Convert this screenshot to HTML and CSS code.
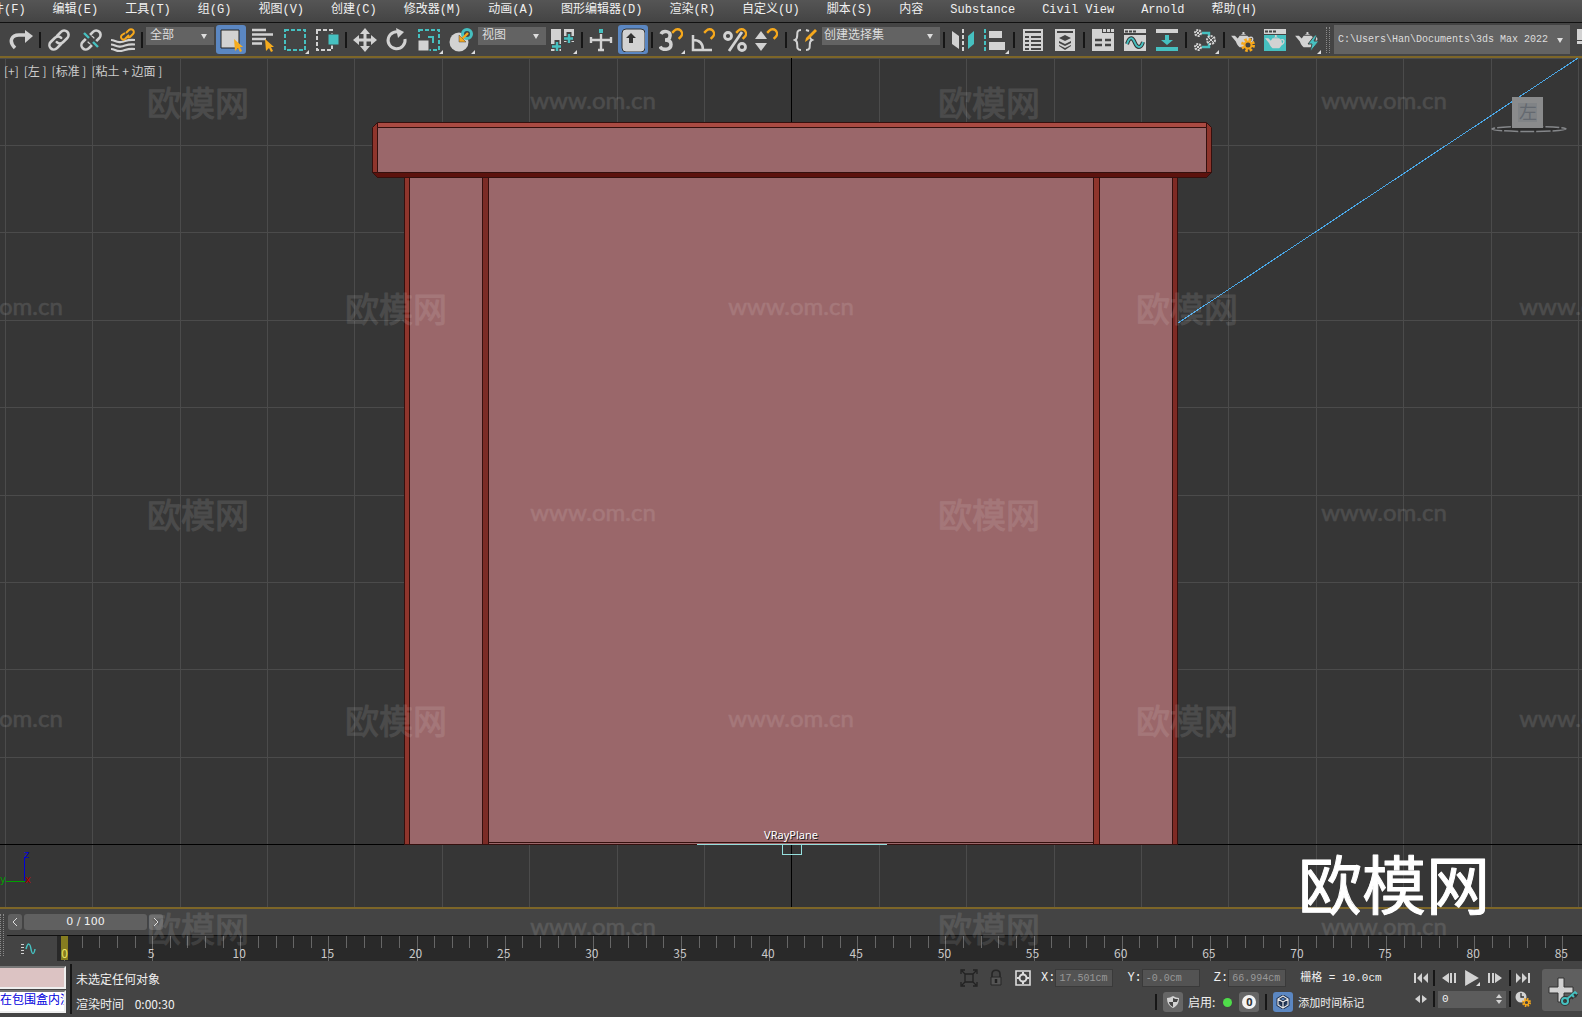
FILE: index.html
```html
<!DOCTYPE html>
<html lang="zh-CN">
<head>
    <meta charset="UTF-8">
    <meta name="viewport" content="width=device-width, initial-scale=1.0">
    <title>3ds Max 2022</title>
    <link rel="stylesheet" href="styles.css">
</head>
<body>
    <svg class="symbols" aria-hidden="true">
        <symbol id="chain" viewBox="0 0 24 24">
            <g fill="none" stroke="#d2d2d2" stroke-width="2.6" stroke-linecap="round">
                <path d="M10 8l4-4.200a4.400 4.400 0 0 1 6.300 6.200l-4.300 4.200a4.400 4.400 0 0 1-6.200 0"/>
                <path d="M14 16l-4 4.200a4.400 4.400 0 0 1-6.300-6.200l4.300-4.200a4.400 4.400 0 0 1 6.200 0"/>
            </g>
        </symbol>
        <symbol id="magnet" viewBox="0 0 12 12">
            <path d="M2 4.500l2-2a4 4 0 0 1 6 5.500l-2 2" fill="none" stroke="#f6a81c" stroke-width="2.200"/>
        </symbol>
        <symbol id="teapot" viewBox="0 0 24 20">
            <path d="M9 5h8c3 2 4 5 3 8-1 2-2 3-3 4H9c-2-2-3-3-4-6L0 5l4 0 3 3zM10 4l2-1V1h2v2l2 1z" fill="#d2d2d2"/>
            <path d="M19 7c5-2 5 4 0 6" fill="none" stroke="#d2d2d2" stroke-width="1.500"/>
        </symbol>
        <symbol id="cursor" viewBox="0 0 10 13">
            <path d="M0 0l9 8H6l2 4-2 1-2-4-3 3z" fill="#f6ac1e"/>
        </symbol>
        <symbol id="gear" viewBox="0 0 14 14">
            <circle cx="7" cy="7" r="5.500" fill="none" stroke="#f6a81c" stroke-width="3" stroke-dasharray="2.500 1.820"/>
            <circle cx="7" cy="7" r="3.500" fill="#444" stroke="#f6a81c" stroke-width="2"/>
        </symbol>
    </svg>

    <nav class="menu-bar">
        <button>文件(F)</button>
        <button>编辑(E)</button>
        <button>工具(T)</button>
        <button>组(G)</button>
        <button>视图(V)</button>
        <button>创建(C)</button>
        <button>修改器(M)</button>
        <button>动画(A)</button>
        <button>图形编辑器(D)</button>
        <button>渲染(R)</button>
        <button>自定义(U)</button>
        <button>脚本(S)</button>
        <button>内容</button>
        <button>Substance</button>
        <button>Civil View</button>
        <button>Arnold</button>
        <button>帮助(H)</button>
    </nav>

    <div class="toolbar">
        <button class="tool" aria-label="重做"><svg viewBox="0 0 24 24"><path d="M6 20C-1 13 3 7 10 7h7" fill="none" stroke="#d2d2d2" stroke-width="3.500"/><path d="M16 2l8 6-8 7z" fill="#d2d2d2"/></svg></button>
        <span class="sep"></span>
        <button class="tool" aria-label="选择并链接"><svg><use href="#chain"/></svg></button>
        <button class="tool" aria-label="取消链接"><svg viewBox="0 0 24 24"><use href="#chain"/><path d="M5 5l14 14" stroke="#444" stroke-width="6"/><path d="M5 5l5 5M14 14l5 5" stroke="#46c0c0" stroke-width="2.400"/></svg></button>
        <button class="tool" aria-label="绑定到空间扭曲"><svg viewBox="0 0 24 24"><g fill="none" stroke="#d2d2d2" stroke-width="2.200"><path d="M0 12c4 0 5 3 10 2s7-3 14-2"/><path d="M0 16.500c4 0 5 3 10 2s7-3 14-2"/><path d="M0 21c4 0 5 3 10 2s7-3 14-2"/></g><path d="M15 5l3-3a2.500 2.500 0 0 1 4 4l-3 3a2.500 2.500 0 0 1-3 0M18 7l-4 4a2.500 2.500 0 0 1-3-4l3-2" fill="none" stroke="#f6a81c" stroke-width="2"/></svg></button>
        <span class="sep"></span>
        <span class="combo"><select aria-label="选择过滤器"><option>全部</option></select></span>
        <button class="tool active" aria-label="选择对象"><svg viewBox="0 0 24 24"><path d="M2 2h18v18H2z" fill="#d2d2d2" stroke="#222"/><use href="#cursor" x="15" y="11" width="10" height="13"/></svg></button>
        <button class="tool" aria-label="按名称选择"><svg viewBox="0 0 24 24"><path d="M1 2h14M1 6.500h21M1 11h14M1 15.500h10" stroke="#d2d2d2" stroke-width="2.400"/><use href="#cursor" x="14" y="11" width="10" height="13"/></svg></button>
        <button class="tool fly" aria-label="矩形选择区域"><svg viewBox="0 0 24 24"><path d="M2 2h20v20H2z" fill="none" stroke="#46c0c0" stroke-width="2" stroke-dasharray="4 2"/></svg></button>
        <button class="tool" aria-label="窗口/交叉"><svg viewBox="0 0 24 24"><path d="M2 2h15v20H2z" fill="none" stroke="#d2d2d2" stroke-width="2" stroke-dasharray="4 2"/><path d="M13 6h11v11H13z" fill="#46c0c0" stroke="#444"/></svg></button>
        <span class="sep"></span>
        <button class="tool" aria-label="选择并移动"><svg viewBox="0 0 24 24"><path d="M12 3v18M3 12h18" stroke="#d2d2d2" stroke-width="3"/><path d="M12 0l5 6H7zM12 24l5-6H7zM0 12l6-5v10zM24 12l-6-5v10z" fill="#d2d2d2"/></svg></button>
        <button class="tool" aria-label="选择并旋转"><svg viewBox="0 0 24 24"><path d="M16 5a8.500 8.500 0 1 0 4 6" fill="none" stroke="#d2d2d2" stroke-width="3"/><path d="M11 0l8 4-6 6z" fill="#d2d2d2"/></svg></button>
        <button class="tool fly" aria-label="选择并缩放"><svg viewBox="0 0 24 24"><path d="M2 2h20v20H2z" fill="none" stroke="#46c0c0" stroke-width="2" stroke-dasharray="4 2"/><path d="M1 12h11v11H1z" fill="#d2d2d2" stroke="#444"/><path d="M11 9h5v6" fill="none" stroke="#46c0c0" stroke-width="2"/></svg></button>
        <button class="tool fly" aria-label="选择并放置"><svg viewBox="0 0 24 24"><circle cx="10" cy="14" r="9.500" fill="#d2d2d2"/><circle cx="18" cy="6" r="4.500" fill="#444" stroke="#46c0c0" stroke-width="3"/><path d="M19 5l-6 6" stroke="#f6a81c" stroke-width="2.400"/><path d="M10 7l7 7h-7z" fill="#f6a81c" stroke="#444" stroke-width=".5"/></svg></button>
        <span class="combo"><select aria-label="参考坐标系"><option>视图</option></select></span>
        <button class="tool fly" aria-label="使用轴点中心"><svg viewBox="0 0 24 24"><path d="M0 1h10v22H0zM13 1h10v13H13z" fill="#d2d2d2"/><path d="M6 12v12M0 18.500h12M18 4v12M12 10.500h12" stroke="#444" stroke-width="5"/><path d="M6 14v9M1 18.500h9M18 6v9M13 10.500h9" stroke="#46c0c0" stroke-width="2.400"/></svg></button>
        <span class="sep"></span>
        <button class="tool" aria-label="选择并操纵"><svg viewBox="0 0 24 24"><path d="M12 6v17M1 12h22M2 9v6M22 9v6M9 22h6" stroke="#d2d2d2" stroke-width="2.400"/><path d="M10 1h4v4h-4z" fill="#46c0c0"/></svg></button>
        <button class="tool active" aria-label="键盘快捷键覆盖"><svg viewBox="0 0 24 24"><rect x="1" y="1" width="23" height="23" rx="4" fill="#d2d2d2" stroke="#333"/><path d="M10 5l5 5h-3v5H8v-5H5z" fill="#333"/></svg></button>
        <span class="sep"></span>
        <button class="tool fly" aria-label="捕捉开关"><svg viewBox="0 0 24 24"><path d="M2 6c2-4 10-3 9 2 0 3-3 4-5 4 3 0 6 1 6 4.500 0 6-9 6-11 2" fill="none" stroke="#d2d2d2" stroke-width="3.500"/><use href="#magnet" x="11" y="0" width="13" height="13"/></svg></button>
        <button class="tool" aria-label="角度捕捉"><svg viewBox="0 0 24 24"><path d="M2 7v15h19M2 12c7 0 10 4 10 10" fill="none" stroke="#d2d2d2" stroke-width="2.500"/><use href="#magnet" x="11" y="0" width="13" height="13"/></svg></button>
        <button class="tool" aria-label="百分比捕捉"><svg viewBox="0 0 24 24"><g fill="none" stroke="#d2d2d2" stroke-width="2.800"><circle cx="5" cy="8" r="3.500"/><circle cx="19" cy="19" r="3.500"/><path d="M19 4L6 23"/></g><use href="#magnet" x="11" y="0" width="13" height="13"/></svg></button>
        <button class="tool" aria-label="微调器捕捉"><svg viewBox="0 0 24 24"><path d="M6 3l6 8H0zM6 23l6-8H0z" fill="#d2d2d2"/><use href="#magnet" x="10" y="0" width="13" height="13"/></svg></button>
        <span class="sep"></span>
        <button class="tool" aria-label="编辑命名选择集"><svg viewBox="0 0 24 24"><path d="M8 2c-7 0-1 8-6 10 5 2-1 10 6 10M13 2l3 1M13 22c7 0 1-8 6-10-2-1-2-2-2-3" fill="none" stroke="#d2d2d2" stroke-width="2"/><path d="M12 14l1-4 9-9 2 2-9 9z" fill="#f6a81c"/></svg></button>
        <span class="combo wide"><select aria-label="命名选择集"><option>创建选择集</option></select></span>
        <span class="sep"></span>
        <button class="tool" aria-label="镜像"><svg viewBox="0 0 24 24"><path d="M1 3l7 5v13l-7-5z" fill="#d2d2d2"/><path d="M12 1v22" stroke="#d2d2d2" stroke-width="2" stroke-dasharray="4 2"/><path d="M23 3l-6 5v13l6-5z" fill="#46c0c0"/></svg></button>
        <button class="tool fly" aria-label="对齐"><svg viewBox="0 0 24 24"><path d="M2 1v22" stroke="#46c0c0" stroke-width="2" stroke-dasharray="4 2"/><path d="M6 3h13v7H6zM6 14h16v8H6z" fill="#d2d2d2"/></svg></button>
        <span class="sep"></span>
        <button class="tool" aria-label="场景资源管理器"><svg viewBox="0 0 24 24"><path d="M2 1h20v22H2z" fill="#d2d2d2"/><path d="M4 4h16M4 9h4M10 9h10M4 13h4M10 13h10M4 17h4M10 17h10M4 21h4M10 21h10" stroke="#444" stroke-width="1.800"/></svg></button>
        <button class="tool" aria-label="层资源管理器"><svg viewBox="0 0 24 24"><path d="M2 1h20v22H2z" fill="#d2d2d2"/><path d="M4 4h16" stroke="#444" stroke-width="2"/><path d="M6 10l6-3 6 3-6 3zM6 13l6 3 6-3v2l-6 3-6-3zM6 17l6 3 6-3v1l-6 4-6-4z" fill="#444"/></svg></button>
        <span class="sep"></span>
        <button class="tool" aria-label="切换功能区"><svg viewBox="0 0 24 24"><path d="M1 1h10v4h12v18H1z" fill="#d2d2d2"/><path d="M12 1h3v3h-3zM16 1h3v3h-3zM20 1h3v3h-3z" fill="#d2d2d2"/><path d="M4 12h7M14 12h6M4 17h7M14 17h6" stroke="#444" stroke-width="2.500"/></svg></button>
        <button class="tool" aria-label="曲线编辑器"><svg viewBox="0 0 24 24"><path d="M1 1h22v22H1z" fill="#d2d2d2"/><path d="M2 3.500h3M6 3.500h3M10 3.500h3M1 6h22" stroke="#444" stroke-width="2"/><path d="M4 16c3-9 6-6 8-1s6 6 8-1" fill="none" stroke="#333" stroke-width="4"/><path d="M4 16c3-9 6-6 8-1s6 6 8-1" fill="none" stroke="#46c0c0" stroke-width="2"/></svg></button>
        <button class="tool" aria-label="图解视图"><svg viewBox="0 0 24 24"><path d="M1 1h22v4H1z" fill="#d2d2d2"/><path d="M10 7h4v5h4l-6 5-6-5h4zM1 19h22v4H1z" fill="#46c0c0"/></svg></button>
        <span class="sep"></span>
        <button class="tool fly" aria-label="材质编辑器"><svg viewBox="0 0 24 24"><path d="M9 5h7v5M9 19h7v-5" fill="none" stroke="#46c0c0" stroke-width="2.400"/><g fill="#555" stroke="#d2d2d2" stroke-width="2" stroke-dasharray="2 1"><circle cx="5" cy="5" r="3"/><circle cx="5" cy="19" r="3"/><circle cx="18" cy="12" r="4"/></g><path d="M3 3l4 4M7 3L3 7M3 17l4 4M7 17l-4 4M15 9l6 6M21 9l-6 6" stroke="#d2d2d2"/></svg></button>
        <span class="sep"></span>
        <button class="tool" aria-label="渲染设置"><svg viewBox="0 0 24 24"><use href="#teapot" x="0" y="3" width="23" height="19"/><use href="#gear" x="10" y="10" width="14" height="14"/></svg></button>
        <button class="tool" aria-label="渲染帧窗口"><svg viewBox="0 0 24 24"><path d="M1 1h22v5H1z" fill="#d2d2d2"/><path d="M2 3.500h3M6 3.500h3M10 3.500h3" stroke="#444" stroke-width="2"/><path d="M1 7h22v16H1z" fill="#46c0c0"/><use href="#teapot" x="2" y="6" width="20" height="17"/></svg></button>
        <button class="tool fly" aria-label="渲染产品"><svg viewBox="0 0 24 24"><use href="#teapot" x="0" y="3" width="23" height="19"/><path d="M20 7l-7 9h4l-2 8 9-11h-5l3-6z" fill="#46c0c0" stroke="#444"/></svg></button>
        <span class="grip"></span>
        <span class="combo path"><select aria-label="项目文件夹"><option>C:\Users\Han\Documents\3ds Max 2022</option></select></span>
        <button class="tool cut" aria-label="更多"><svg viewBox="0 0 8 24"><path d="M2 1h6v11H2zM2 13h6v3H2z" fill="#d2d2d2"/></svg></button>
    </div>

    <main class="viewport">
        <!-- left view: grid, model, light and gizmos -->
        <svg class="scene" viewBox="0 58 1582 849" preserveAspectRatio="xMidYMid slice" role="img" aria-label="左视图">
            <g fill="none" stroke="#4b4b4b" shape-rendering="crispEdges">
                <path d="M5.500 58v849M92.500 58v849M180.500 58v849M267.500 58v849M354.500 58v849M442.500 58v849M529.500 58v849M617.500 58v849M704.500 58v849M879.500 58v849M966.500 58v849M1054.500 58v849M1141.500 58v849M1228.500 58v849M1316.500 58v849M1403.500 58v849M1491.500 58v849M1578.500 58v849"/>
                <path d="M0 58.500h1582M0 145.500h1582M0 232.500h1582M0 320.500h1582M0 407.500h1582M0 495.500h1582M0 582.500h1582M0 669.500h1582M0 757.500h1582"/>
                <path d="M791.500 58v849M0 844.500h1582" stroke="#000"/>
            </g>
            <g stroke="#35100e" shape-rendering="crispEdges">
                <path d="M404.500 177.500h773v667h-773z" fill="#9a676a"/>
                <path d="M404.500 177.500h5v667h-5z" fill="#8f352c"/>
                <path d="M482.500 177.500h6v667h-6z" fill="#7b2b26"/>
                <path d="M1093.500 177.500h6v667h-6z" fill="#8f352c"/>
                <path d="M1172.500 177.500h5v667h-5z" fill="#7f2a24"/>
                <path d="M488.500 842.500h605"/>
            </g>
            <g stroke="#35100e">
                <path d="M377.500 122.500h829l5 5v45l-5 5h-829l-5-5v-45z" fill="#8f352c"/>
                <path d="M377.500 122.500h829v5h-829z" fill="#aa4a42"/>
                <path d="M372.500 172.500h839l-5 5h-829z" fill="#5c120d"/>
                <path d="M377.500 127.500h829v45h-829z" fill="#9a676a"/>
            </g>
            <path d="M1178 323L1578 58" stroke="#4aa8e8" shape-rendering="crispEdges"/>
            <path d="M697 844.500h190M782.500 844v10h19v-10" fill="none" stroke="#96e0de" shape-rendering="crispEdges"/>
            <text class="node-name" x="791" y="839">VRayPlane</text>
            <!-- axis tripod -->
            <g shape-rendering="crispEdges">
                <path d="M24.500 857v25" stroke="#0000d8"/>
                <path d="M6 881.500h19" stroke="#00a000"/>
            </g>
            <text class="axis" x="24" y="858" fill="#0000d8">z</text>
            <text class="axis" x="0" y="883" fill="#00a000">y</text>
            <text class="axis" x="25" y="883" fill="#b00000">x</text>
            <!-- view cube -->
            <ellipse cx="1529" cy="129" rx="37" ry="2.500" fill="#2c2c2c" stroke="#85878a" stroke-width="1.500" stroke-dasharray="14 2"/>
            <path d="M1512 97h31v31h-31z" fill="#8a8b8c"/>
            <path d="M1518 103h19v19h-19z" fill="#808386"/>
            <text class="cube-face" x="1528" y="119">左</text>
        </svg>
        <div class="view-labels">
            <button>[+]</button>
            <button>[左 ]</button>
            <button>[标准 ]</button>
            <button>[粘土 + 边面 ]</button>
        </div>
    </main>

    <div class="time-area">
        <span class="grip"></span>
        <div class="time-main">
            <div class="time-slider">
                <button class="step" aria-label="上一帧"><svg viewBox="0 0 6 10"><path d="M5 1L1 5l4 4" fill="none" stroke="#ddd"/></svg></button>
                <button class="thumb">0 / 100</button>
                <button class="step" aria-label="下一帧"><svg viewBox="0 0 6 10"><path d="M1 1l4 4-4 4" fill="none" stroke="#ddd"/></svg></button>
            </div>
            <div class="track-bar">
                <button class="mini-curve" aria-label="打开迷你曲线编辑器"><svg viewBox="0 0 16 12"><path d="M1 1.500h3M1 4.500h3M1 7.500h3M1 10.500h3" stroke="#d2d2d2"/><path d="M6 6c2-7 4-6 5 0s3 6 4 0" fill="none" stroke="#46c0c0" stroke-width="1.500"/></svg></button>
                <div class="ruler" id="ruler"></div>
            </div>
        </div>
    </div>

    <footer class="status-bar">
        <div class="listener">
            <input class="macro" aria-label="宏录制器">
            <input class="script-line" aria-label="脚本侦听器" value="在包围盒内渲染">
        </div>
        <div class="prompt">
            <p>未选定任何对象</p>
            <p>渲染时间 <span>0:00:30</span></p>
        </div>
        <div class="coords">
            <div class="status-row">
                <button class="mini" aria-label="孤立当前选择"><svg viewBox="0 0 18 18"><path d="M5 5h8v8H5zM1 5V1h4M13 1h4v4M17 13v4h-4M5 17H1v-4M2 2l3 3M16 2l-3 3M16 16l-3-3M2 16l3-3" fill="none" stroke="#222" stroke-width="1.300"/></svg></button>
                <button class="mini" aria-label="选择锁定切换"><svg viewBox="0 0 18 18"><path d="M5 8V5c0-5 8-5 8 0v3" fill="none" stroke="#262626" stroke-width="1.600"/><path d="M4 8h10v8H4z" fill="#555" stroke="#262626"/><path d="M9 10v4" stroke="#222" stroke-width="2.500"/></svg></button>
                <button class="mini" aria-label="绝对模式变换输入"><svg viewBox="0 0 18 18"><path d="M2 2h14v14H2z" fill="none" stroke="#ddd" stroke-width="1.600"/><circle cx="9" cy="9" r="3.500" fill="none" stroke="#ddd" stroke-width="2"/><path d="M9 3v3M9 12v3M3 9h3M12 9h3" stroke="#ddd" stroke-width="2"/></svg></button>
                <label class="coord">X:<input value="17.501cm" disabled></label>
                <label class="coord">Y:<input value="-0.0cm" disabled></label>
                <label class="coord">Z:<input value="66.994cm" disabled></label>
                <span class="grid-size">栅格 = 10.0cm</span>
            </div>
            <div class="status-row tags">
                <span class="sep"></span>
                <button class="chip" aria-label="安全脚本"><svg viewBox="0 0 14 14"><path d="M7 1c2 1 4 2 6 2 0 5-2 8-6 10C3 11 1 8 1 3c2 0 4-1 6-2z" fill="#d2d2d2"/><path d="M7 3v4h4c0-1 1-2 1-3-2 0-3 0-5-1zM7 7v5c-2-1-4-3-4-5z" fill="#444"/></svg></button>
                <span>启用:</span>
                <i class="dot"></i>
                <button class="chip"><b>0</b></button>
                <span class="sep"></span>
                <button class="chip blue" aria-label="自适应降级"><svg viewBox="0 0 14 14"><path d="M7 1l5 3v6l-5 3-5-3V4zM2 4l5 3 5-3M7 7v6M4 9l3-2 3 2" fill="none" stroke="#1c2d4a" stroke-width="3"/><path d="M7 1l5 3v6l-5 3-5-3V4zM2 4l5 3 5-3M7 7v6" fill="none" stroke="#e8e8e8" stroke-width="1.200"/></svg></button>
                <button class="time-tag">添加时间标记</button>
            </div>
        </div>
        <div class="playback">
            <button aria-label="转至开头"><svg viewBox="0 0 16 12"><path d="M1 1h2v10H1zM9 1v10L4 6zM15 1v10l-5-5z"/></svg></button>
            <span class="sep"></span>
            <button aria-label="上一帧"><svg viewBox="0 0 16 12"><path d="M8 1v10L1 6zM9 1h2v10H9zM13 1h2v10h-2z"/></svg></button>
            <button class="play fly" aria-label="播放动画"><svg viewBox="0 0 12 14"><path d="M0 0l12 7-12 7z"/></svg></button>
            <button aria-label="下一帧"><svg viewBox="0 0 16 12"><path d="M1 1h2v10H1zM5 1h2v10H5zM8 1v10l7-5z"/></svg></button>
            <span class="sep"></span>
            <button aria-label="转至结尾"><svg viewBox="0 0 16 12"><path d="M1 1v10l5-5zM7 1v10l5-5zM13 1h2v10h-2z"/></svg></button>
            <button aria-label="关键点模式切换"><svg viewBox="0 0 16 12"><path d="M7 2v8L2 6zM9 2v8l5-4z"/></svg></button>
            <span class="sep"></span>
            <label class="frame"><input aria-label="当前帧" value="0"><svg viewBox="0 0 6 10"><path d="M0 4l3-4 3 4zM0 6l3 4 3-4z"/></svg></label>
            <span class="sep"></span>
            <button aria-label="时间配置"><svg viewBox="0 0 16 16"><circle cx="6" cy="6" r="5.500"/><path d="M6 2v4h3" fill="none" stroke="#333" stroke-width="1.300"/><use href="#gear" x="7" y="7" width="9" height="9"/></svg></button>
        </div>
        <button class="set-key" aria-label="设置关键点"><svg viewBox="0 0 34 34"><path d="M13 5h6v9h9v6h-9v9h-6v-9H4v-6h9z" fill="#d2d2d2" stroke="#333"/><g fill="none"><path d="M20 28l9-7 3 2M27 23l2 2" stroke="#333" stroke-width="4"/><circle cx="20" cy="28" r="3" stroke="#333" stroke-width="4"/><circle cx="20" cy="28" r="3" stroke="#46c0c0" stroke-width="2"/><path d="M22 26l8-7 2 2M27 22l2 2" stroke="#46c0c0" stroke-width="2"/></g></svg></button>
    </footer>

    <svg class="watermark" viewBox="0 0 1582 1017" preserveAspectRatio="xMidYMid slice">
        <g class="mark">
            <text x="198" y="116">欧模网</text>
            <text x="989" y="116">欧模网</text>
            <text x="396" y="322">欧模网</text>
            <text x="1187" y="322">欧模网</text>
            <text x="198" y="528">欧模网</text>
            <text x="989" y="528">欧模网</text>
            <text x="396" y="734">欧模网</text>
            <text x="1187" y="734">欧模网</text>
            <text x="198" y="942">欧模网</text>
            <text x="989" y="942">欧模网</text>
        </g>
        <g class="url">
            <text x="593" y="109">www.om.cn</text>
            <text x="1384" y="109">www.om.cn</text>
            <text x="0" y="315">www.om.cn</text>
            <text x="791" y="315">www.om.cn</text>
            <text x="1582" y="315">www.om.cn</text>
            <text x="593" y="521">www.om.cn</text>
            <text x="1384" y="521">www.om.cn</text>
            <text x="0" y="727">www.om.cn</text>
            <text x="791" y="727">www.om.cn</text>
            <text x="1582" y="727">www.om.cn</text>
            <text x="593" y="935">www.om.cn</text>
            <text x="1384" y="935">www.om.cn</text>
        </g>
        <text class="brand" x="1394" y="909">欧模网</text>
    </svg>

    <script src="script.js"></script>
</body>
</html>
```

FILE: styles.css
```css
* {
    box-sizing: border-box;
}

body {
    margin: 0;
    height: 100vh;
    display: flex;
    flex-direction: column;
    position: relative;
    overflow: hidden;
    background: #444;
    color: #f0f0f0;
    font: 12px/16px "Liberation Mono", "Noto Sans CJK SC", monospace;
}

button,
input,
select {
    font: inherit;
    color: inherit;
    background: none;
    border: none;
    border-radius: 0;
    padding: 0;
    margin: 0;
    white-space: nowrap;
}

p {
    margin: 0;
}

svg {
    display: block;
}

.symbols {
    position: absolute;
    width: 0;
    height: 0;
}

.menu-bar {
    display: flex;
    flex: none;
    gap: 27px;
    height: 23px;
    padding-bottom: 3px;
    margin-left: -20px;
    background: linear-gradient(#555, #444);
    border-bottom: 1px solid #111;
}

/* main toolbar */
.toolbar {
    display: flex;
    flex: none;
    align-items: center;
    gap: 2px;
    height: 35px;
    padding-left: 6px;
    overflow: hidden;
    border-bottom: 2px solid #7d6628;
}

.tool {
    position: relative;
    flex: none;
    width: 30px;
    height: 29px;
    padding: 3px;
    border-radius: 3px;
}

.tool svg {
    width: 24px;
    height: 24px;
}

.tool.active {
    background: #5b87c2;
}

.tool.cut {
    width: 10px;
    overflow: hidden;
}

.tool.cut svg {
    width: 8px;
}

.fly::after {
    content: "";
    position: absolute;
    right: 1px;
    bottom: 0;
    border: 2px solid #ddd;
    border-top-color: transparent;
    border-left-color: transparent;
}

.sep {
    flex: none;
    width: 2px;
    height: 16px;
    margin: 0 1px;
    background: #161616;
}

.grip {
    flex: none;
    width: 4px;
    height: 26px;
    margin: 0 2px;
    border: dotted #8a8a8a;
    border-width: 0 1px;
}

.combo {
    position: relative;
    flex: none;
    align-self: flex-start;
    width: 68px;
    height: 18px;
    margin-top: 4px;
    background: #636363;
}

.combo::after {
    content: "";
    position: absolute;
    right: 7px;
    top: 50%;
    margin-top: -2px;
    border: 3px solid transparent;
    border-top: 5px solid #ddd;
    border-bottom: 0;
}

.combo select {
    appearance: none;
    display: block;
    width: 100%;
    height: 100%;
    padding: 0 4px;
    color: #ddd;
}

.combo.wide {
    width: 118px;
}

.combo.wide select {
    padding-left: 2px;
}

.combo.path {
    flex: 1;
    height: 29px;
    margin-top: 2px;
    font-size: 10px;
}

/* viewport */
.viewport {
    position: relative;
    flex: 1;
    min-height: 0;
    background: #363636;
    border-bottom: 2px solid #7d6628;
}

.scene {
    position: absolute;
    width: 100%;
    height: 100%;
}

.view-labels {
    position: relative;
    display: flex;
    gap: 5px;
    padding: 5px 4px;
    color: #ccc;
    font: 12px/16px "Noto Sans CJK SC", sans-serif;
}

.node-name {
    fill: #fff;
    font: 11px "Noto Sans", sans-serif;
    text-anchor: middle;
    text-shadow: 1px 1px 0 #222;
}

.axis {
    font: 10px "DejaVu Sans", sans-serif;
}

.cube-face {
    fill: #646970;
    font: 18px "Noto Sans CJK SC", sans-serif;
    text-anchor: middle;
}

/* time slider and track bar */
.time-area {
    display: flex;
    flex: none;
    align-items: center;
}

.time-area > .grip {
    height: 42px;
    margin: 0 3px 0 0;
}

.time-main {
    flex: 1;
    min-width: 0;
}

.time-slider {
    display: flex;
    gap: 2px;
    height: 26px;
    padding: 5px 1px;
}

.time-slider button {
    height: 16px;
    background: #606060;
    border-radius: 3px;
    font: 11px/16px "DejaVu Sans", sans-serif;
}

.step {
    width: 14px;
    padding: 3px 4px;
}

.step svg {
    width: 6px;
    height: 10px;
}

.thumb {
    width: 123px;
}

.track-bar {
    display: flex;
    height: 26px;
    border-top: 1px solid #111;
}

.mini-curve {
    flex: none;
    width: 50px;
    padding-left: 13px;
}

.mini-curve svg {
    width: 16px;
    height: 12px;
}

.ruler {
    display: grid;
    grid-auto-flow: column;
    grid-auto-columns: minmax(0, 1fr);
    flex: 1;
    padding: 0 2px 0 7px;
    background: #292929;
    color: #c8c8c8;
    font: 12px/12px "Noto Sans CJK SC", sans-serif;
}

.tick {
    height: 12px;
    border-left: 1px solid #666;
}

.tick.major {
    height: 25px;
    padding-top: 11px;
}

.tick span {
    display: block;
    width: 24px;
    margin-left: -14px;
    text-align: center;
}

.tick.current span {
    width: 7px;
    height: 24px;
    margin: -11px 0 0 -4px;
    padding-top: 11px;
    background: #857d20;
    color: #e8e060;
}

/* status bar */
.status-bar {
    display: flex;
    flex: none;
    height: 56px;
    padding-top: 3px;
}

.listener {
    display: flex;
    flex-direction: column;
    gap: 1px;
    width: 66px;
    padding-top: 2px;
}

.listener input {
    width: 66px;
    height: 23px;
    padding-bottom: 5px;
    border: 2px solid #eee;
    border-top-color: #777;
    border-left: none;
    color: #00d;
}

.macro {
    background: #dcc3c3;
}

.script-line {
    background: #fff;
}

.prompt {
    display: flex;
    flex-direction: column;
    gap: 9px;
    height: 50px;
    margin-left: 4px;
    padding: 7px 4px;
    border-left: 2px solid #161616;
    font-family: "Noto Sans CJK SC", sans-serif;
}

.prompt span {
    margin-left: 8px;
}

.coords {
    display: flex;
    flex-direction: column;
    gap: 4px;
    width: 445px;
    margin-left: auto;
    padding-top: 4px;
}

.status-row {
    display: flex;
    align-items: center;
    height: 20px;
}

.mini {
    width: 18px;
    margin-right: 9px;
}

.coord {
    display: flex;
    align-items: center;
    margin-right: 14px;
}

.coord input {
    width: 58px;
    height: 18px;
    padding-left: 3px;
    background: #535353;
    border: 1px solid #3a3a3a;
    color: #999;
    font-size: 10px;
}

.grid-size {
    font-size: 11px;
}

.tags {
    align-self: flex-end;
    width: 251px;
    gap: 5px;
    font-family: "Noto Sans CJK SC", sans-serif;
}

.chip {
    display: flex;
    align-items: center;
    justify-content: center;
    width: 20px;
    height: 20px;
    background: #666;
    border-radius: 3px;
}

.chip svg {
    width: 14px;
    height: 14px;
}

.chip b {
    width: 14px;
    height: 14px;
    border-radius: 50%;
    background: #f4f4f4;
    color: #333;
    font: bold 11px/14px "Open Sans", sans-serif;
}

.chip.blue {
    background: #5b87c2;
}

.time-tag {
    font-size: 11px;
}

.dot {
    width: 9px;
    height: 9px;
    margin: 0 2px 0 3px;
    border-radius: 50%;
    background: #4fdc4a;
}

.playback {
    display: grid;
    grid-template-columns: 16px 4px 20px 20px 20px 4px 16px;
    grid-template-rows: 20px 18px;
    gap: 2px 3px;
    align-items: center;
    justify-items: center;
    margin-left: 8px;
    padding-top: 4px;
    align-content: start;
    fill: #d2d2d2;
}

.playback button {
    position: relative;
}

.playback button svg {
    width: 16px;
    height: 16px;
}

.playback .play {
    width: 18px;
    padding-left: 1px;
}

.frame {
    display: flex;
    align-items: center;
    grid-column: span 3;
    width: 68px;
    height: 17px;
    padding: 0 4px;
    background: #5c5c5c;
}

.frame input {
    width: 54px;
    font-size: 11px;
}

.frame svg {
    width: 6px;
    height: 10px;
}

.set-key {
    flex: none;
    width: 40px;
    height: 42px;
    margin: 5px 0 0 11px;
    padding: 3px;
    background: #5f5f5f;
    border-radius: 3px 0 0 3px;
}

.set-key svg {
    width: 34px;
    height: 34px;
}

/* watermark over the whole window */
.watermark {
    position: absolute;
    inset: 0;
    width: 100%;
    height: 100%;
    pointer-events: none;
    text-anchor: middle;
    fill: #fff;
}

.mark {
    opacity: 0.1;
    stroke: #fff;
    stroke-width: 1;
    stroke-linejoin: round;
    font: 34px "Noto Sans CJK SC", sans-serif;
}

.url {
    opacity: 0.11;
    stroke: #fff;
    stroke-width: 0.5;
    font: 24px "Lato", sans-serif;
}

.brand {
    stroke: #fff;
    stroke-width: 1;
    stroke-linejoin: round;
    font: 64px "Noto Sans CJK SC", sans-serif;
}
```

FILE: script.js
```js
const ruler = document.getElementById('ruler');

// one cell per frame, a label on every fifth
for (let frame = 0; frame < 86; frame++) {
    const tick = document.createElement('div');
    tick.className = 'tick';
    if (frame % 5 === 0) {
        tick.classList.add('major');
        const label = document.createElement('span');
        label.textContent = frame;
        tick.appendChild(label);
    }
    if (frame === 0) {
        tick.classList.add('current');
    }
    ruler.appendChild(tick);
}
```
